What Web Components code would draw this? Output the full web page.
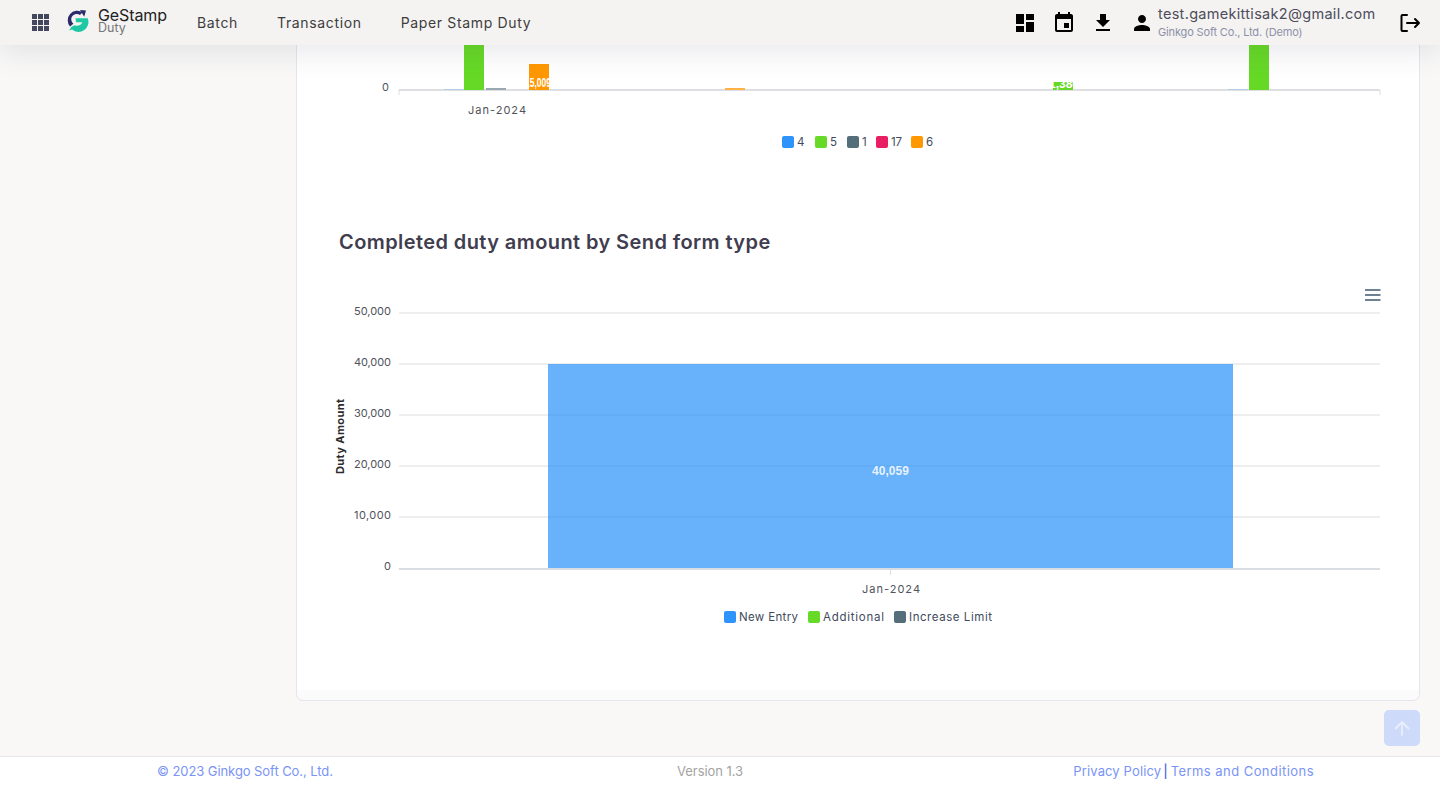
<!DOCTYPE html>
<html lang="en">
<head>
<meta charset="utf-8">
<title>GeStamp Duty</title>
<style>
    html, body { margin: 0; height: 100%; overflow: hidden; }
    body { font-family: Inter, "Noto Sans", sans-serif; background: #f9f8f7; }
</style>
</head>
<body>
<gs-app>
    <gs-header slot="header"></gs-header>
    <gs-card slot="main">
        <gs-first-chart></gs-first-chart>
        <h-title>Completed duty amount by Send form type</h-title>
        <gs-second-chart></gs-second-chart>
    </gs-card>
    <gs-back-top slot="main"></gs-back-top>
    <gs-footer slot="footer"></gs-footer>
</gs-app>

<script>
class GsApp extends HTMLElement {
    constructor() {
        super();
        this.attachShadow({ mode: 'open' });
    }

    connectedCallback() {
        this.shadowRoot.innerHTML = `
            <style>
                :host {
                    display: grid;
                    grid-template-rows: 45px 1fr 30px;
                    height: 786px;
                }
                main {
                    position: relative;
                    overflow: hidden;
                    padding: 0 20px 0 296px;
                }
            </style>
            <slot name="header"></slot>
            <main><slot name="main"></slot></main>
            <slot name="footer"></slot>
        `;
    }
}

class GsHeader extends HTMLElement {
    constructor() {
        super();
        this.attachShadow({ mode: 'open' });
    }

    connectedCallback() {
        this.shadowRoot.innerHTML = `
            <style>
                :host {
                    display: flex;
                    align-items: center;
                    position: relative;
                    z-index: 2;
                    height: 45px;
                    background: #f4f3f2;
                    box-shadow: 0 6px 30px rgba(60, 60, 90, 0.12);
                    padding: 0 18px 0 32px;
                    color: #3d3d3d;
                }
                .apps { display: grid; grid-template-columns: repeat(3, 5px); gap: 1px; width: 17px; }
                .apps i { width: 5px; height: 5px; background: #43465d; }
                .logo { display: flex; align-items: center; margin-left: 16px; width: 102px; }
                .logo svg { flex: none; margin-top: -5px; }
                .brand { margin-left: 9px; display: flex; flex-direction: column; margin-top: -3px; }
                .brand b { font-weight: 400; font-size: 16px; line-height: 13px; color: #222; letter-spacing: -0.1px; }
                .brand span { font-size: 12.5px; line-height: 12px; color: #777; }
                nav { display: flex; margin-left: 30px; gap: 39px; font-size: 14px; letter-spacing: 0.65px; }
                .right { display: flex; align-items: center; margin-left: auto; gap: 15px; }
                svg.ic { width: 24px; height: 24px; display: block; fill: #000; }
                .user { display: flex; align-items: center; gap: 4px; }
                .who { display: flex; flex-direction: column; gap: 3px; width: 225px; }
                .who span { font-size: 14.5px; line-height: 16px; color: #4d4d5b; letter-spacing: 0.3px; white-space: nowrap; }
                .who small { font-size: 11px; line-height: 14px; color: #8d90a8; letter-spacing: -0.15px; white-space: nowrap; }
            </style>
            <div class="apps">${'<i></i>'.repeat(9)}</div>
            <div class="logo">
                <svg width="24" height="26" viewBox="0 0 24 26">
                    <path d="M17.5 5.2A9.6 9.6 0 0 0 5 19.5l3.4-2.8A5.4 5.4 0 0 1 15 8z" fill="#2b2a6b"/>
                    <path d="M15 3l6 .6-1.8 6.2z" fill="#2b2a6b"/>
                    <path d="M10.5 11.2h12.2A10 10 0 0 1 7 22.6l-3 .8 2.6-3.6 3.2-1.6a5.6 5.6 0 0 0 7.6-3h-6.4z" fill="#1ec8a5"/>
                </svg>
                <div class="brand"><b>GeStamp</b><span>Duty</span></div>
            </div>
            <nav><span>Batch</span><span>Transaction</span><span>Paper Stamp Duty</span></nav>
            <div class="right">
                <svg class="ic" viewBox="0 0 24 24"><path d="M3 13h8V3H3v10zm0 8h8v-6H3v6zm10 0h8V11h-8v10zm0-18v6h8V3h-8z"/></svg>
                <svg class="ic" viewBox="0 0 24 24"><path d="M17 12h-5v5h5v-5zM16 1v2H8V1H6v2H5c-1.11 0-1.99.9-1.99 2L3 19c0 1.1.89 2 2 2h14c1.1 0 2-.9 2-2V5c0-1.1-.9-2-2-2h-1V1h-2zm3 18H5V8h14v11z"/></svg>
                <svg class="ic" viewBox="0 0 24 24"><path d="M19 9h-4V3H9v6H5l7 7 7-7zM5 18v2h14v-2H5z"/></svg>
                <div class="user">
                    <svg class="ic" viewBox="0 0 24 24"><path d="M12 12c2.21 0 4-1.79 4-4s-1.79-4-4-4-4 1.79-4 4 1.79 4 4 4zm0 2c-2.67 0-8 1.34-8 4v2h16v-2c0-2.66-5.33-4-8-4z"/></svg>
                    <div class="who"><span>test.gamekittisak2@gmail.com</span><small>Ginkgo Soft Co., Ltd. (Demo)</small></div>
                </div>
                <svg class="ic" viewBox="0 0 24 24" style="fill:none;stroke:#000;stroke-width:2;stroke-linecap:round;stroke-linejoin:round"><path d="M9 4H4.5a1 1 0 0 0-1 1v14a1 1 0 0 0 1 1H9M9 12h12M17 8l4 4-4 4"/></svg>
            </div>
        `;
    }
}

class GsCard extends HTMLElement {
    constructor() {
        super();
        this.attachShadow({ mode: 'open' });
    }

    connectedCallback() {
        this.shadowRoot.innerHTML = `
            <style>
                :host {
                    display: block;
                    box-sizing: border-box;
                    height: 656px;
                    background: linear-gradient(#fff 645px, #fbfbfb 645px);
                    border: 1px solid #e6e6ef;
                    border-top: none;
                    border-radius: 0 0 7px 7px;
                    padding-left: 33px;
                }
            </style>
            <slot></slot>
        `;
    }
}

class HTitle extends HTMLElement {
    constructor() {
        super();
        this.attachShadow({ mode: 'open' });
    }

    connectedCallback() {
        this.shadowRoot.innerHTML = `
            <style>
                :host {
                    display: block;
                    font-size: 20px;
                    font-weight: 600;
                    line-height: 24px;
                    color: #3f3d4e;
                    margin: 60px 0 31px 9px;
                    letter-spacing: 0.41px;
                }
            </style>
            <slot></slot>
        `;
    }
}

const chartStyle = `
    <style>
        :host { display: block; }
        svg { display: block; font-family: Inter, "Noto Sans", sans-serif; }
        text { font-size: 11px; fill: #50535b; }
        .legend { font-size: 11.5px; fill: #3f4a5c; }
        .axis { stroke: #dedfe2; stroke-width: 2; }
        .tick { stroke: #dedfe2; stroke-width: 1; }
        .grid { stroke: #e8e8e9; stroke-width: 1.5; }
    </style>
`;

// legend swatch + label, in page coordinates
function legendItem(x, color, label, y, width) {
    return `<rect x="${x}" y="${y}" width="12" height="12" rx="2" fill="${color}"/>
        <text class="legend" x="${x + 15}" y="${y + 10}" textLength="${width}">${label}</text>`;
}

class GsFirstChart extends HTMLElement {
    constructor() {
        super();
        this.attachShadow({ mode: 'open' });
    }

    connectedCallback() {
        const bars = [
            [444, 89, '#b7cfe6', 1],
            [464, 45, '#66d926', 45],
            [486, 88, '#9aa8b2', 2],
            [529, 64, '#ff9800', 26],
            [725, 88, '#ffb347', 2],
            [1053, 82, '#66d926', 8],
            [1228, 89, '#b7cfe6', 1],
            [1249, 45, '#66d926', 45],
        ];
        this.shadowRoot.innerHTML = chartStyle + `
            <svg width="1090" height="125" viewBox="330 45 1090 125">
                <defs>
                    <clipPath id="orange"><rect x="529" y="64" width="20" height="26"/></clipPath>
                    <clipPath id="green"><rect x="1053" y="82" width="20" height="8"/></clipPath>
                </defs>
                <line class="axis" x1="399" y1="90" x2="1380" y2="90"/>
                <line class="tick" x1="399" y1="90" x2="399" y2="95"/>
                <line class="tick" x1="1380" y1="90" x2="1380" y2="95"/>
                ${bars.map(b => `<rect x="${b[0]}" y="${b[1]}" width="20" height="${b[3]}" fill="${b[2]}"/>`).join('')}
                <g clip-path="url(#orange)"><text x="525" y="87" textLength="26" lengthAdjust="spacingAndGlyphs" style="font:bold 12px 'Liberation Sans';fill:#fff">15,009</text></g>
                <g clip-path="url(#green)"><text x="1049" y="88" style="font:bold 12px 'Liberation Sans';fill:#fff">1,380</text></g>
                <text x="389" y="91" text-anchor="end">0</text>
                <text x="468" y="114" textLength="58">Jan-2024</text>
                ${legendItem(782, '#2e93fa', '4', 136, 8)}
                ${legendItem(815, '#66da26', '5', 136, 8)}
                ${legendItem(847, '#546e7a', '1', 136, 5)}
                ${legendItem(876, '#e91e63', '17', 136, 11)}
                ${legendItem(911, '#ff9800', '6', 136, 8)}
            </svg>
        `;
    }
}

class GsSecondChart extends HTMLElement {
    constructor() {
        super();
        this.attachShadow({ mode: 'open' });
    }

    connectedCallback() {
        const ticks = [[313, '50,000'], [364, '40,000'], [415, '30,000'], [466, '20,000'], [517, '10,000']];
        this.shadowRoot.innerHTML = chartStyle + `
            <svg width="1090" height="350" viewBox="330 285 1090 350">
                ${ticks.map(t => `
                    <line class="grid" x1="399" y1="${t[0]}" x2="1380" y2="${t[0]}"/>
                    <text x="354" y="${t[0] + 2}" textLength="37">${t[1]}</text>`).join('')}
                <text x="384" y="570">0</text>
                <rect x="548" y="364" width="685" height="205" fill="#2e93fa" fill-opacity="0.72"/>
                <line class="axis" x1="399" y1="569" x2="1380" y2="569" style="stroke:#d8dce3"/>
                <line class="tick" x1="890.5" y1="569" x2="890.5" y2="575"/>
                <text x="872" y="475" textLength="37" style="font:bold 12px 'Liberation Sans';fill:#fff;fill-opacity:.85">40,059</text>
                <text x="862" y="593" textLength="58">Jan-2024</text>
                <text transform="translate(344 474) rotate(-90)" textLength="75" style="font-size:11px;font-weight:700;fill:#2b2b2b">Duty Amount</text>
                <g stroke="#6e8192" stroke-width="2">
                    <line x1="1365" y1="290" x2="1380.5" y2="290"/>
                    <line x1="1365" y1="295" x2="1380.5" y2="295"/>
                    <line x1="1365" y1="300" x2="1380.5" y2="300"/>
                </g>
                ${legendItem(724, '#2e93fa', 'New Entry', 611, 59)}
                ${legendItem(808, '#66da26', 'Additional', 611, 61)}
                ${legendItem(894, '#546e7a', 'Increase Limit', 611, 83)}
            </svg>
        `;
    }
}

class GsBackTop extends HTMLElement {
    constructor() {
        super();
        this.attachShadow({ mode: 'open' });
    }

    connectedCallback() {
        this.shadowRoot.innerHTML = `
            <style>
                :host {
                    position: absolute;
                    right: 20px;
                    bottom: 10px;
                    width: 36px;
                    height: 36px;
                    border-radius: 5px;
                    background: #cddafa;
                    display: flex;
                    align-items: center;
                    justify-content: center;
                }
            </style>
            <svg width="16" height="16" viewBox="0 0 16 16" fill="none" stroke="#e8eefd" stroke-width="1.8" stroke-linecap="round" stroke-linejoin="round">
                <path d="M8 15V2M1.5 8.5L8 2l6.5 6.5"/>
            </svg>
        `;
    }
}

class GsFooter extends HTMLElement {
    constructor() {
        super();
        this.attachShadow({ mode: 'open' });
    }

    connectedCallback() {
        this.shadowRoot.innerHTML = `
            <style>
                :host {
                    display: grid;
                    grid-template-columns: 1fr auto 1fr;
                    align-items: center;
                    box-sizing: border-box;
                    height: 30px;
                    background: #fff;
                    border-top: 1px solid #e8e8ee;
                    padding: 0 126px 2px 157px;
                    font-size: 13px;
                    letter-spacing: -0.07px;
                    color: #7a94f5;
                }
                .ver { color: #a3a3a3; margin-left: -51px; }
                .links { justify-self: end; display: flex; }
                .privacy { letter-spacing: 0.13px; }
                .terms { letter-spacing: 0.45px; }
                b { font-weight: 500; color: #4d6ae0; margin: 0 3px 0 2px; }
            </style>
            <span>© 2023 Ginkgo Soft Co., Ltd.</span>
            <span class="ver">Version 1.3</span>
            <span class="links"><span class="privacy">Privacy Policy</span><b>|</b><span class="terms">Terms and Conditions</span></span>
        `;
    }
}

customElements.define('gs-app', GsApp);
customElements.define('gs-header', GsHeader);
customElements.define('gs-card', GsCard);
customElements.define('h-title', HTitle);
customElements.define('gs-first-chart', GsFirstChart);
customElements.define('gs-second-chart', GsSecondChart);
customElements.define('gs-back-top', GsBackTop);
customElements.define('gs-footer', GsFooter);
</script>
</body>
</html>
